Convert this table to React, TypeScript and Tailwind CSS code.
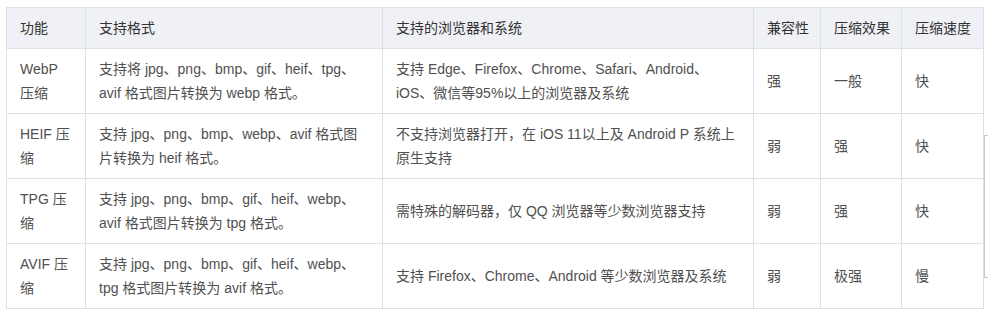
import React from "react";

const rows = [
  ["WebP 压缩", "支持将 jpg、png、bmp、gif、heif、tpg、avif 格式图片转换为 webp 格式。", "支持 Edge、Firefox、Chrome、Safari、Android、iOS、微信等95%以上的浏览器及系统", "强", "一般", "快"],
  ["HEIF 压缩", "支持 jpg、png、bmp、webp、avif 格式图片转换为 heif 格式。", "不支持浏览器打开，在 iOS 11以上及 Android P 系统上原生支持", "弱", "强", "快"],
  ["TPG 压缩", "支持 jpg、png、bmp、gif、heif、webp、avif 格式图片转换为 tpg 格式。", "需特殊的解码器，仅 QQ 浏览器等少数浏览器支持", "弱", "强", "快"],
  ["AVIF 压缩", "支持 jpg、png、bmp、gif、heif、webp、tpg 格式图片转换为 avif 格式。", "支持 Firefox、Chrome、Android 等少数浏览器及系统", "弱", "极强", "慢"],
];

const headers = ["功能", "支持格式", "支持的浏览器和系统", "兼容性", "压缩效果", "压缩速度"];
const widths = ["w-[79px]", "w-[297px]", "w-[371px]", "w-[67px]", "w-[81px]", "w-[82px]"];

export default function App() {
  return (
    <div className="relative w-[988px] h-[315px] bg-white overflow-hidden" style={{ fontFamily: '"Liberation Sans", "Noto Sans CJK SC", sans-serif' }}>
      <div className="pt-[7px] pl-[6px]">
        <table className="border-collapse table-fixed w-[977px] text-[14px] leading-6 text-[#505050]">
          <thead>
            <tr className="bg-[#f0f1f6]">
              {headers.map((h, i) => (
                <th key={i} className={`${widths[i]} border border-[#dde0ea] pl-[13px] pr-[6px] py-2 h-[41px] text-left font-normal whitespace-nowrap text-[#333]`}>{h}</th>
              ))}
            </tr>
          </thead>
          <tbody>
            {rows.map((r, ri) => (
              <tr key={ri}>
                {r.map((c, ci) => (
                  <td key={ci} className="border border-[#dde0ea] px-[13px] py-2 h-[65px] align-middle">{c}</td>
                ))}
              </tr>
            ))}
          </tbody>
        </table>
      </div>
      <div className="absolute left-[984px] top-[135px] w-[10px] h-[143px] border-l border-t border-b border-[#c9c9c9]" />
    </div>
  );
}
